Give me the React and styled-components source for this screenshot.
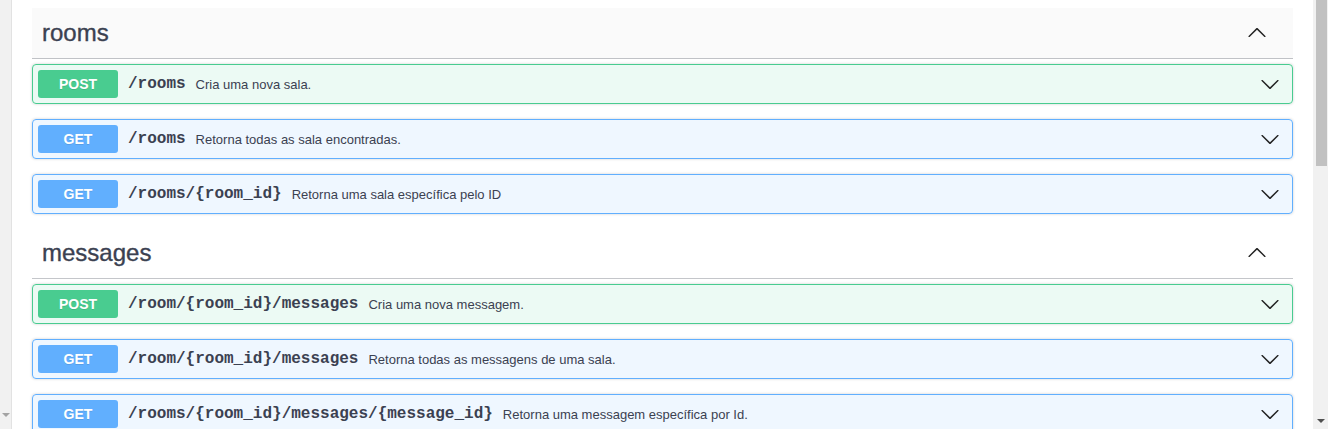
import React from "react";
import styled, { createGlobalStyle } from "styled-components";

const Global = createGlobalStyle`
  html, body {
    margin: 0;
    padding: 0;
    overflow: hidden;
    background: #fff;
    font-family: "Liberation Sans", Arial, sans-serif;
  }
`;

const Colors = {
  text: "#3b4151",
  post: "#49cc90",
  get: "#61affe",
  postBg: "rgba(73, 204, 144, 0.1)",
  getBg: "rgba(97, 175, 254, 0.1)",
};

const Style = {
  Page: styled.div`
    display: flex;
    height: 429px;
    overflow: hidden;
  `,
  Gutter: styled.div`
    flex: 0 0 12px;
    box-sizing: border-box;
    background: #f1f1f1;
    border-right: 1px solid #e2e2e2;
    display: flex;
    flex-direction: column;
    justify-content: flex-end;
    align-items: center;
    padding-bottom: 6px;
  `,
  Main: styled.div`
    flex: 1;
    min-width: 0;
    padding: 8px 20px 0;
    overflow: hidden;
  `,
  Scrollbar: styled.div`
    flex: 0 0 15px;
    background: #f1f1f1;
    display: flex;
    flex-direction: column;
    align-items: center;
  `,
  Thumb: styled.div`
    width: 11px;
    height: 166px;
    margin-left: 1px;
    background: #c1c1c1;
  `,
  ScrollSpace: styled.div`
    flex: 1;
  `,
  ArrowDown: styled.div`
    width: 0;
    height: 0;
    border-left: 4px solid transparent;
    border-right: 4px solid transparent;
    border-top: 4px solid ${(p) => p.color};
    margin-bottom: ${(p) => p.bottom || 6}px;
  `,
  Section: styled.div`
    margin-bottom: -1px;
  `,
  TagHeader: styled.h3`
    display: flex;
    align-items: center;
    justify-content: space-between;
    margin: 0 0 5px;
    padding: 10px 26px 10px 10px;
    border-bottom: 1px solid rgba(59, 65, 81, 0.3);
    background: ${(p) => (p.hover ? "#fafafa" : "#fff")};
    font-size: 24px;
    line-height: 30px;
    font-weight: normal;
    color: ${Colors.text};
    -webkit-text-stroke: 0.35px ${Colors.text};
  `,
  Opblock: styled.div`
    margin: 0 0 15px;
    border: 1px solid ${(p) => (p.method === "POST" ? Colors.post : Colors.get)};
    border-radius: 4px;
    background: ${(p) => (p.method === "POST" ? Colors.postBg : Colors.getBg)};
    box-shadow: 0 0 3px rgba(0, 0, 0, 0.19);
  `,
  Summary: styled.div`
    display: flex;
    align-items: center;
    padding: 5px;
  `,
  Method: styled.span`
    min-width: 80px;
    padding: 6px 0;
    border-radius: 3px;
    background: ${(p) => (p.method === "POST" ? Colors.post : Colors.get)};
    color: #fff;
    font-size: 14px;
    line-height: 16px;
    font-weight: bold;
    text-align: center;
    text-shadow: 0 1px 0 rgba(0, 0, 0, 0.1);
  `,
  Path: styled.span`
    padding: 0 10px;
    font-family: "Liberation Mono", "Courier New", monospace;
    font-size: 16px;
    font-weight: bold;
    color: ${Colors.text};
  `,
  Description: styled.span`
    flex: 1;
    font-size: 13px;
    color: ${Colors.text};
  `,
  Chevron: styled.svg`
    width: 20px;
    height: 20px;
    margin-right: ${(p) => p.right || 0}px;
    fill: #222;
    transform: ${(p) => (p.up ? "rotate(180deg)" : "none")};
  `,
};

const ARROW =
  "M17.418 6.109c.272-.268.709-.268.979 0s.271.701 0 .969l-7.908 7.83c-.27.268-.707.268-.979 0l-7.908-7.83c-.27-.268-.27-.701 0-.969.271-.268.709-.268.979 0L10 13.25l7.418-7.141z";

function Chevron({ up, right }) {
  return (
    <Style.Chevron viewBox="0 0 20 20" up={up ? 1 : 0} right={right}>
      <path d={ARROW} />
    </Style.Chevron>
  );
}

const sections = [
  {
    tag: "rooms",
    hover: true,
    ops: [
      { method: "POST", path: "/rooms", desc: "Cria uma nova sala." },
      { method: "GET", path: "/rooms", desc: "Retorna todas as sala encontradas." },
      { method: "GET", path: "/rooms/{room_id}", desc: "Retorna uma sala específica pelo ID" },
    ],
  },
  {
    tag: "messages",
    hover: false,
    ops: [
      { method: "POST", path: "/room/{room_id}/messages", desc: "Cria uma nova messagem." },
      { method: "GET", path: "/room/{room_id}/messages", desc: "Retorna todas as messagens de uma sala." },
      {
        method: "GET",
        path: "/rooms/{room_id}/messages/{message_id}",
        desc: "Retorna uma messagem específica por Id.",
      },
    ],
  },
];

function App() {
  return (
    <>
      <Global />
      <Style.Page>
        <Style.Gutter>
          <Style.ArrowDown color="#a3a3a3" bottom={0} />
        </Style.Gutter>
        <Style.Main>
          {sections.map((s) => (
            <Style.Section key={s.tag}>
              <Style.TagHeader hover={s.hover ? 1 : 0}>
                <span>{s.tag}</span>
                <Chevron up />
              </Style.TagHeader>
              {s.ops.map((op, i) => (
                <Style.Opblock key={i} method={op.method}>
                  <Style.Summary>
                    <Style.Method method={op.method}>{op.method}</Style.Method>
                    <Style.Path>{op.path}</Style.Path>
                    <Style.Description>{op.desc}</Style.Description>
                    <Chevron right={7} />
                  </Style.Summary>
                </Style.Opblock>
              ))}
            </Style.Section>
          ))}
        </Style.Main>
        <Style.Scrollbar>
          <Style.Thumb />
          <Style.ScrollSpace />
          <Style.ArrowDown color="#505050" />
        </Style.Scrollbar>
      </Style.Page>
    </>
  );
}

export default App;
